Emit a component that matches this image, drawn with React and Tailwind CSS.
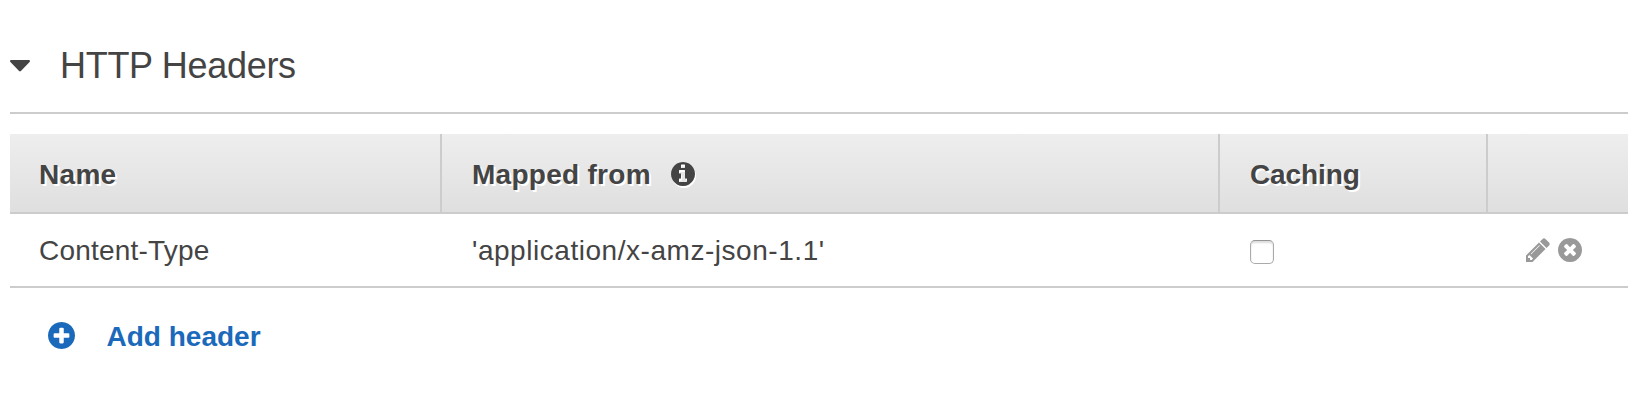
const DISC =
  'q0 209-103 385.5t-279.5 279.5-385.5 103-385.5-103-279.5-279.5-103-385.5 103-385.5 279.5-279.5 385.5-103 385.5 103 279.5 279.5 103 385.5z';

const PATHS = {
  info:
    'M1152 1376v-160q0-14-9-23t-23-9h-96v-512q0-14-9-23t-23-9h-320q-14 0-23 9t-9 23v160q0 14 9 23t23 9h96v320h-96q-14 0-23 9t-9 23v160q0 14 9 23t23 9h448q14 0 23-9t9-23zm-128-896v-160q0-14-9-23t-23-9h-192q-14 0-23 9t-9 23v160q0 14 9 23t23 9h192q14 0 23-9t9-23zm640 416' + DISC,
  remove:
    'M1277 1122q0-26-19-45l-181-181 181-181q19-19 19-45 0-27-19-46l-90-90q-19-19-46-19-26 0-45 19l-181 181-181-181q-19-19-45-19-27 0-46 19l-90 90q-19 19-19 46 0 26 19 45l181 181-181 181q-19 19-19 45 0 27 19 46l90 90q19 19 46 19 26 0 45-19l181-181 181 181q19 19 45 19 27 0 46-19l90-90q19-19 19-46zm387-226' + DISC,
  plus:
    'M1344 960v-128q0-26-19-45t-45-19h-256v-256q0-26-19-45t-45-19h-128q-26 0-45 19t-19 45v256h-256q-26 0-45 19t-19 45v128q0 26 19 45t45 19h256v256q0 26 19 45t45 19h128q26 0 45-19t19-45v-256h256q26 0 45-19t19-45zm320-64' + DISC,
  pencil:
    'M491 1536l91-91-235-235-91 91v107h128v128h107zm523-928q0-22-22-22-10 0-17 7l-542 542q-7 7-7 17 0 22 22 22 10 0 17-7l542-542q7-7 7-17zm-54-192l416 416-832 832h-416v-416zm683 96q0 53-37 90l-166 166-416-416 166-165q36-38 90-38 53 0 91 38l235 234q37 39 37 91z',
};

function Icon({ name, className }) {
  return (
    <svg viewBox="128 128 1536 1536" fill="currentColor" className={className} aria-hidden="true">
      <path d={PATHS[name]} />
    </svg>
  );
}

const COLS = 'grid grid-cols-[432px_778px_268px_140px] border-b-2 border-[#ccc]';

export default function App() {
  return (
    <main className="h-[400px] bg-white pl-[10px] pr-5 font-['Liberation_Sans',Arial,sans-serif] text-[28px] leading-8 text-[#444]">
      <button className="flex h-[114px] w-full items-center border-b-2 border-[#ccc] pt-5 text-left">
        <svg viewBox="0 0 20 12" className="h-3 w-5 shrink-0" fill="currentColor" aria-hidden="true">
          <path d="M1.2 0h17.6q1.2 0 1.2 1.1 0 .5-.4.9l-8.7 9q-.9.9-1.8 0L.4 2Q0 1.600 0 1.100 0 0 1.200 0z" />
        </svg>
        <h2 className="ml-[30px] text-[36px] leading-10 tracking-[-0.3px]">HTTP Headers</h2>
      </button>

      <section className="mt-5">
        <div className={`${COLS} h-20 bg-linear-to-b from-[#eee] to-[#dfdfdf] font-bold [text-shadow:2px_2px_0_#fff]`}>
          <div className="flex items-center border-r-2 border-[#ccc] pl-[29px] pt-[3px] tracking-[0.3px]">Name</div>
          <div className="flex items-center border-r-2 border-[#ccc] pl-[30px] pt-[3px] tracking-[0.28px]">
            Mapped from
            <Icon name="info" className="mb-[1px] ml-5 size-6 drop-shadow-[1px_2px_0_#fff]" />
          </div>
          <div className="flex items-center border-r-2 border-[#ccc] pl-[30px] pt-[3px] tracking-[-0.1px]">Caching</div>
          <div />
        </div>

        <div className={`${COLS} h-[74px]`}>
          <div className="flex items-center pl-[29px] pt-[1px] tracking-[0.2px]">Content-Type</div>
          <div className="flex items-center pl-[30px] pt-[1px] tracking-[0.54px]">'application/x-amz-json-1.1'</div>
          <div className="flex items-center pl-[30px] pt-[4px]">
            <input
              type="checkbox"
              aria-label="Caching"
              className="size-6 appearance-none rounded-[5px] border border-[#aaa] border-t-[#969696] bg-white shadow-[inset_0_2px_2px_#ddd]"
            />
          </div>
          <div className="flex items-center gap-2 pl-[38px] text-[#999]">
            <Icon name="pencil" className="size-6" />
            <Icon name="remove" className="size-6" />
          </div>
        </div>
      </section>

      <button className="mt-8 flex items-center pl-[37.5px] font-bold text-[#1a69ba]">
        <Icon name="plus" className="mb-[3px] size-[27px]" />
        <span className="ml-[32px] pt-[1px]">Add header</span>
      </button>
    </main>
  );
}
